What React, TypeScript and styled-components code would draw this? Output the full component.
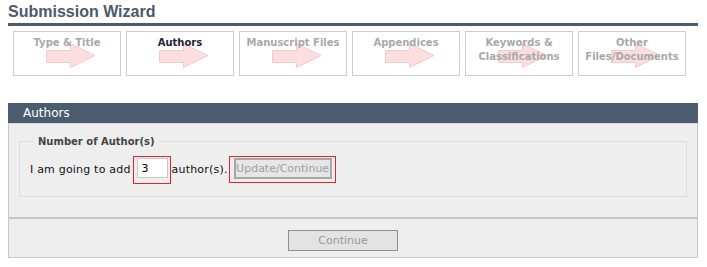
import React from 'react';
import styled, { createGlobalStyle } from 'styled-components';

interface Step {
  lines: string[];
  active?: boolean;
}

const steps: Step[] = [
  { lines: ['Type & Title'] },
  { lines: ['Authors'], active: true },
  { lines: ['Manuscript Files'] },
  { lines: ['Appendices'] },
  { lines: ['Keywords &', 'Classifications'] },
  { lines: ['Other', 'Files/Documents'] },
];

function StepArrow() {
  return (
    <ArrowSvg width="50" height="26" viewBox="0 0 50 26">
      <polygon
        points="0.5,7.5 24.5,7.5 24.5,0.5 49,12.5 24.5,24.5 24.5,19.5 0.5,19.5"
        fill="#fddede"
        stroke="#f4caca"
        strokeWidth="1"
      />
    </ArrowSvg>
  );
}

function App() {
  return (
    <Page>
      <GlobalStyle />
      <Title>Submission Wizard</Title>
      <StepList>
        {steps.map((s) => (
          <StepBox key={s.lines.join(' ')}>
            <StepArrow />
            <StepLabel $active={!!s.active}>
              {s.lines.map((l) => (
                <div key={l}>{l}</div>
              ))}
            </StepLabel>
          </StepBox>
        ))}
      </StepList>

      <Section>
        <SectionHeader>Authors</SectionHeader>
        <SectionBody>
          <Content>
            <Group>
              <Legend>Number of Author(s)</Legend>
              <Row>
                <span>I am going to add</span>
                <InputFrame>
                  <CountInput defaultValue="3" />
                </InputFrame>
                <AfterText>author(s).</AfterText>
                <ButtonFrame>
                  <UpdateButton disabled>Update/Continue</UpdateButton>
                </ButtonFrame>
              </Row>
            </Group>
          </Content>
          <Footer>
            <ContinueButton disabled>Continue</ContinueButton>
          </Footer>
        </SectionBody>
      </Section>
    </Page>
  );
}

const GlobalStyle = createGlobalStyle`
  body {
    margin: 0;
    background: #ffffff;
    font-family: 'DejaVu Sans', Verdana, sans-serif;
  }
`;

const Page = styled.div`
  width: 690px;
  padding: 3px 0 0 8px;
`;

const Title = styled.h1`
  margin: 0;
  padding-bottom: 2px;
  font-family: 'Liberation Sans', Arial, sans-serif;
  font-size: 16px;
  font-weight: 700;
  line-height: 18px;
  color: #4b5a6e;
  border-bottom: 3px solid #4b5b70;
`;

const StepList = styled.div`
  display: flex;
  gap: 5px;
  margin: 5px 0 0 5px;
`;

const StepBox = styled.div`
  position: relative;
  box-sizing: border-box;
  width: 108px;
  height: 45px;
  padding-top: 4px;
  border: 1px solid #cccccc;
  text-align: center;
`;

const ArrowSvg = styled.svg`
  position: absolute;
  left: 32px;
  top: 11px;
`;

const StepLabel = styled.div<{ $active: boolean }>`
  position: relative;
  font-size: 10px;
  font-weight: 700;
  line-height: 14px;
  color: ${(p) => (p.$active ? '#1f2433' : '#a8a8ab')};
`;

const Section = styled.section`
  margin-top: 27px;
`;

const SectionHeader = styled.div`
  height: 20px;
  padding-left: 15px;
  background: #4b5c71;
  color: #ffffff;
  font-size: 12px;
  line-height: 20px;
`;

const SectionBody = styled.div`
  background: #eeeeee;
  border: 1px solid #c8c8c8;
  border-top-color: #dadada;
`;

const Content = styled.div`
  padding: 11px 10px 20px;
`;

const Group = styled.fieldset`
  margin: 0;
  padding: 6px 10px 12px;
  border: 1px solid #dcdcdc;
`;

const Legend = styled.legend`
  margin-left: 4px;
  padding: 0 4px;
  font-size: 10px;
  font-weight: 700;
  line-height: 13px;
  color: #444444;
`;

const Row = styled.div`
  display: flex;
  align-items: center;
  font-size: 11px;
  letter-spacing: 0.2px;
  color: #111111;
`;

const InputFrame = styled.span`
  display: inline-block;
  margin: 2px 1px 0 2px;
  padding: 1px 2px 5px 3px;
  border: 1px solid #e3222b;
`;

const CountInput = styled.input`
  display: block;
  box-sizing: border-box;
  width: 31px;
  height: 20px;
  padding: 0 4px;
  border: 1px solid #c9c9c9;
  background: #ffffff;
  font-family: 'DejaVu Sans', Verdana, sans-serif;
  font-size: 11px;
  color: #000000;
  outline: none;
`;

const AfterText = styled.span`
  margin-right: 1px;
`;

const ButtonFrame = styled.span`
  display: inline-block;
  padding: 1px 3px 3px 4px;
  border: 1px solid #e3222b;
`;

const UpdateButton = styled.button`
  display: block;
  box-sizing: border-box;
  width: 98px;
  height: 21px;
  padding: 0;
  border: 2px solid #a6a6a6;
  background: #e6e6e6;
  color: #a0a0a0;
  font-family: 'DejaVu Sans', Verdana, sans-serif;
  font-size: 11px;
  letter-spacing: 0;
`;

const Footer = styled.div`
  display: flex;
  justify-content: center;
  padding: 11px 20px 6px 0;
  border-top: 2px solid #c6c6c6;
`;

const ContinueButton = styled.button`
  box-sizing: border-box;
  width: 110px;
  height: 21px;
  padding: 0;
  border: 1px solid #8f8f8f;
  background: #e3e3e3;
  color: #999999;
  font-family: 'DejaVu Sans', Verdana, sans-serif;
  font-size: 11px;
`;

export default App;
